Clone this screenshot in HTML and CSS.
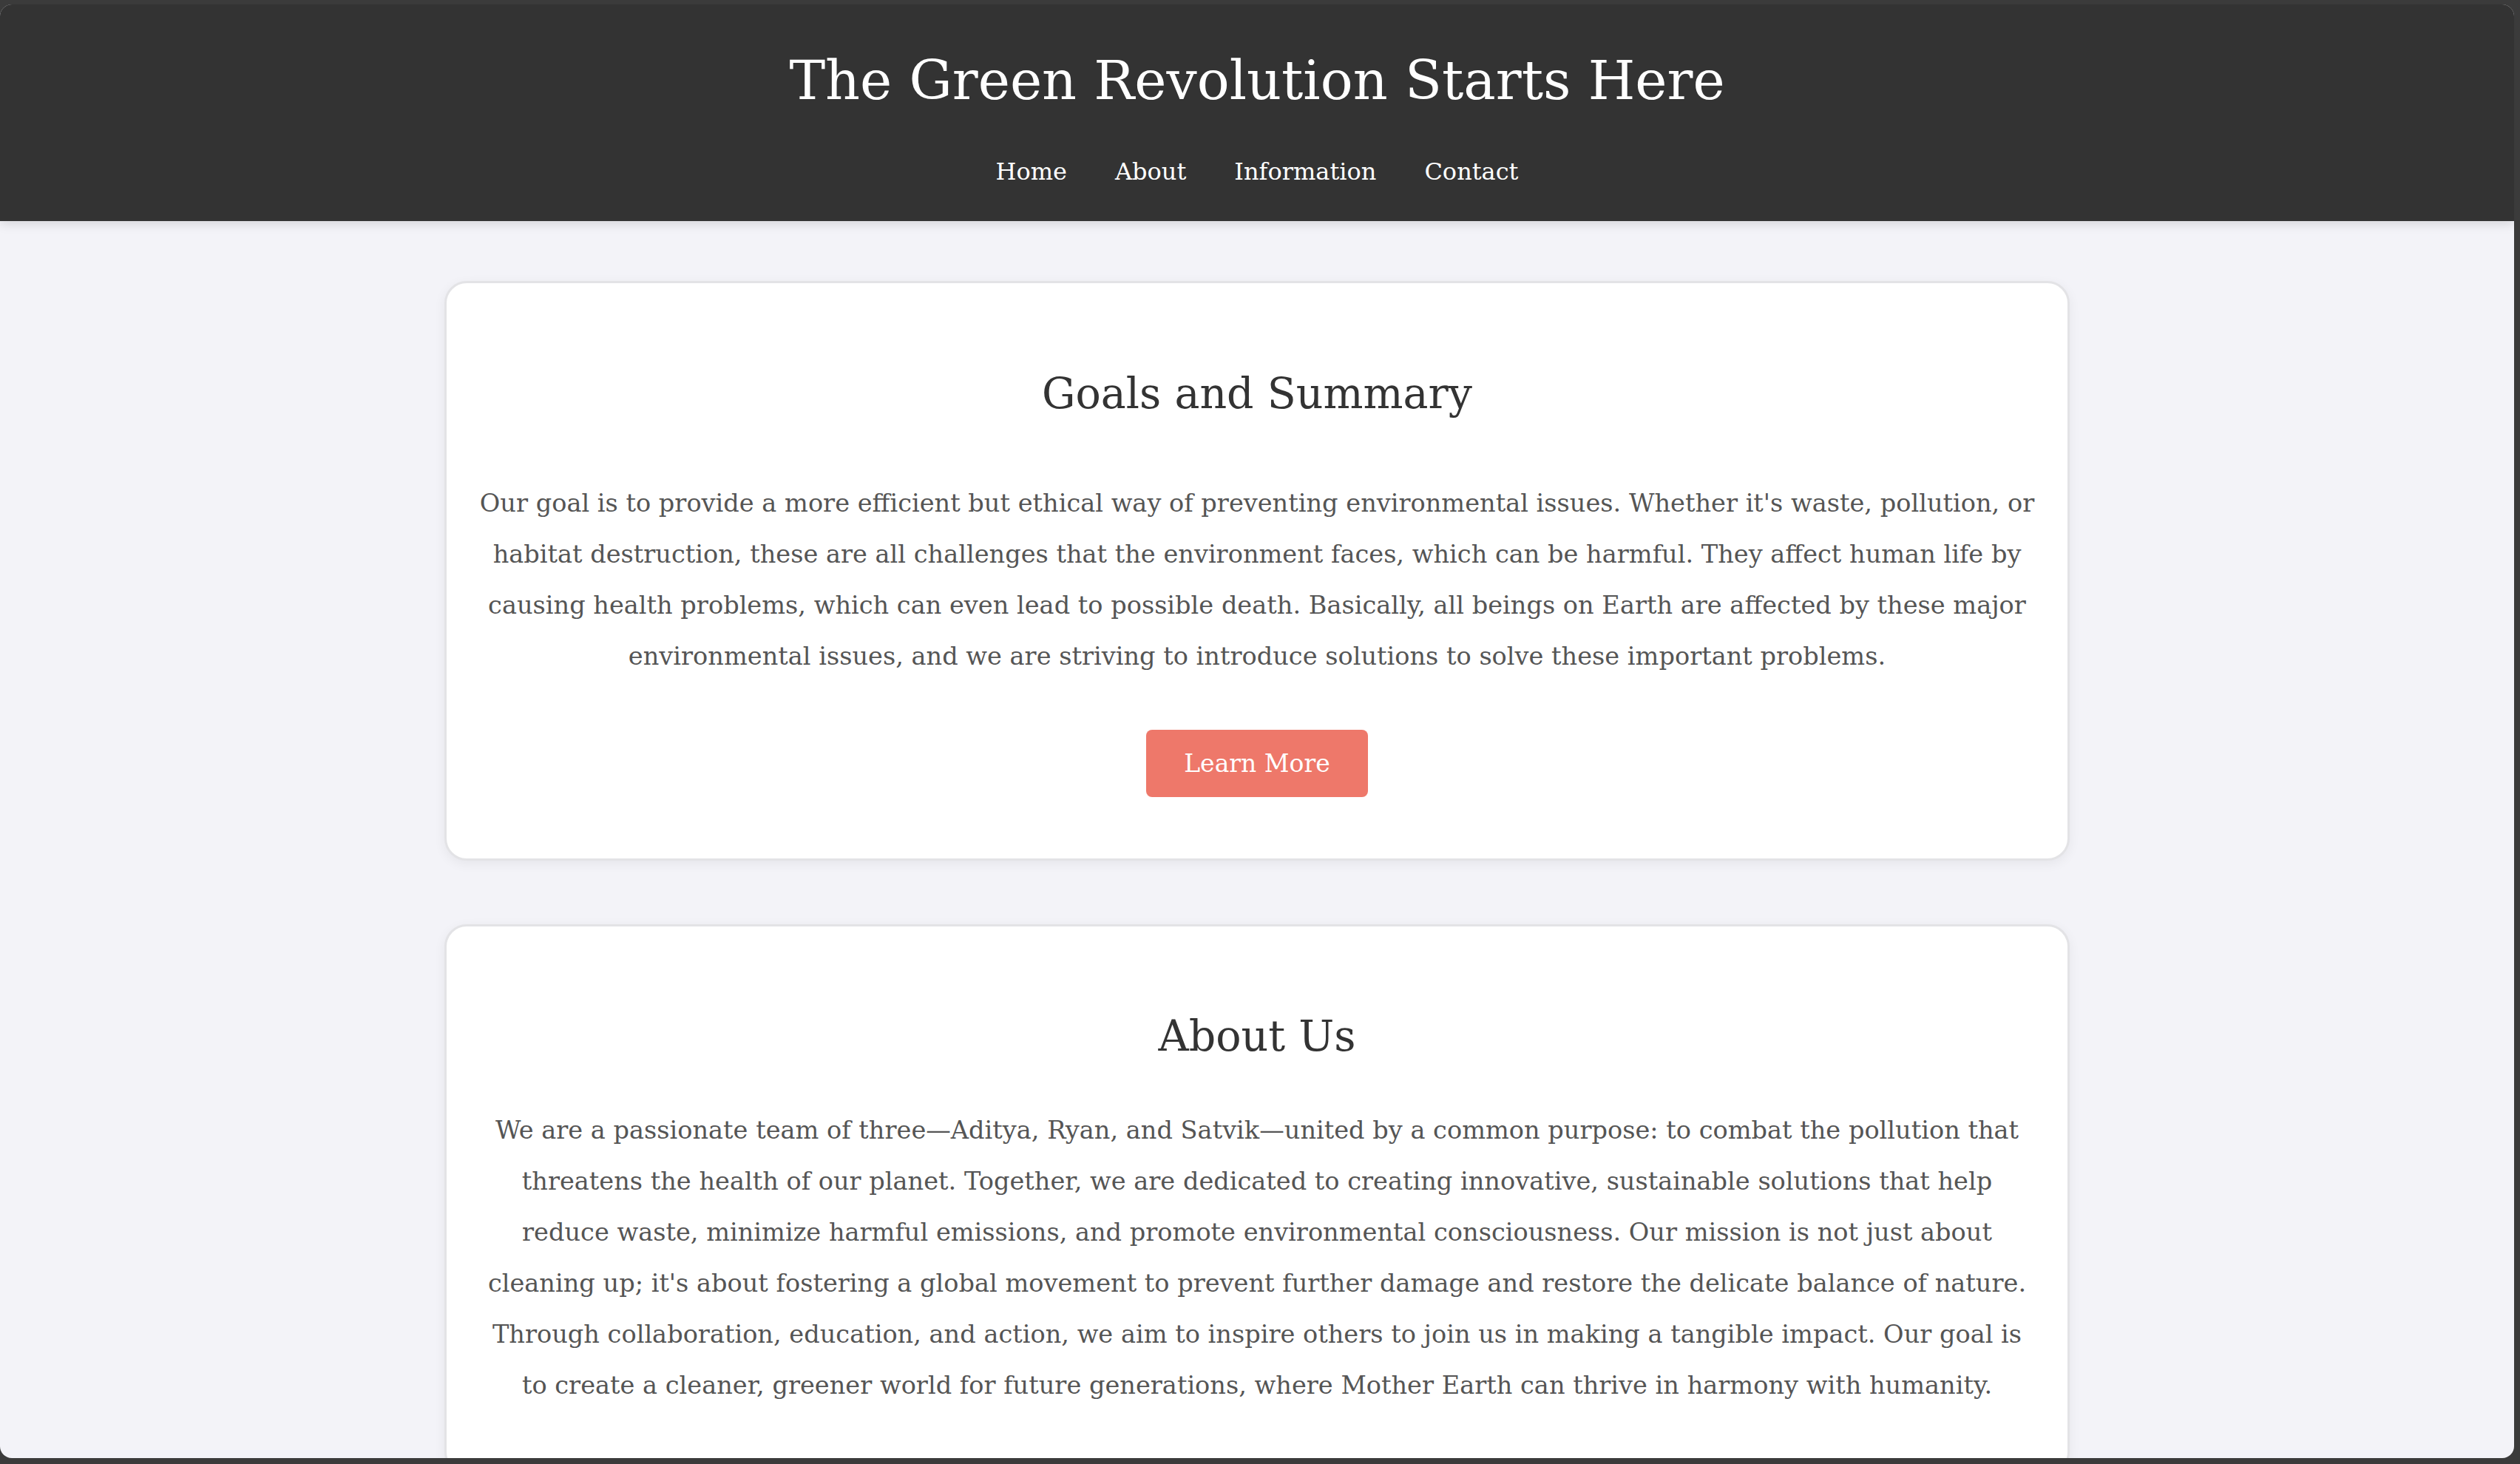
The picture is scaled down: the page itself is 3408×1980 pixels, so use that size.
FILE: index.html
```html
<!DOCTYPE html>
<html lang="en">
<head>
<meta charset="utf-8">
<title>The Green Revolution Starts Here</title>
<link rel="stylesheet" href="styles.css">
</head>
<body>
<div class="window">
  <header class="site-header">
    <h1 class="site-title">The Green Revolution Starts Here</h1>
    <nav class="site-nav">
      <a href="#" class="nav-link">Home</a>
      <a href="#" class="nav-link">About</a>
      <a href="#" class="nav-link">Information</a>
      <a href="#" class="nav-link">Contact</a>
    </nav>
  </header>
  <main class="content">
    <section class="card card-goals">
      <h2 class="card-title">Goals and Summary</h2>
      <p class="card-text">Our goal is to provide a more efficient but ethical way of preventing environmental issues. Whether it's waste, pollution, or habitat destruction, these are all challenges that the environment faces, which can be harmful. They affect human life by causing health problems, which can even lead to possible death. Basically, all beings on Earth are affected by these major environmental issues, and we are striving to introduce solutions to solve these important problems.</p>
      <a href="#" class="btn">Learn More</a>
    </section>
    <section class="card card-about">
      <h2 class="card-title">About Us</h2>
      <p class="card-text">We are a passionate team of three—Aditya, Ryan, and Satvik—united by a common purpose: to combat the pollution that threatens the health of our planet. Together, we are dedicated to creating innovative, sustainable solutions that help reduce waste, minimize harmful emissions, and promote environmental consciousness. Our mission is not just about cleaning up; it's about fostering a global movement to prevent further damage and restore the delicate balance of nature. Through collaboration, education, and action, we aim to inspire others to join us in making a tangible impact. Our goal is to create a cleaner, greener world for future generations, where Mother Earth can thrive in harmony with humanity.</p>
    </section>
  </main>
</div>
</body>
</html>
```
FILE: styles.css
```css
html, body {
  margin: 0;
  padding: 0;
}

body {
  background: #3b3b3b;
  height: 1980px;
  overflow: hidden;
  font-family: "DejaVu Serif", "Liberation Serif", serif;
}

.window {
  width: 3400px;
  height: 1966px;
  margin-top: 6px;
  border-radius: 16px;
  overflow: hidden;
  background: #f3f3f8;
}

.site-header {
  position: relative;
  z-index: 1;
  background: #333333;
  padding: 59px 0 47px;
  text-align: center;
  box-shadow: 0 4px 14px rgba(0, 0, 0, 0.12);
}

.site-title {
  margin: 0;
  font-weight: normal;
  font-size: 73px;
  line-height: 1.2;
  color: #ffffff;
}

.site-nav {
  margin-top: 59px;
  display: flex;
  justify-content: center;
  gap: 65px;
}

.nav-link {
  color: #ffffff;
  text-decoration: none;
  font-size: 32px;
  line-height: 40px;
}

.content {
  padding-top: 81px;
  display: flex;
  flex-direction: column;
  align-items: center;
  gap: 86px;
}

.card {
  box-sizing: border-box;
  width: 2198px;
  background: #ffffff;
  border: 3px solid #e3e3e6;
  border-radius: 30px;
  box-shadow: 0 4px 16px rgba(0, 0, 0, 0.06);
  padding: 114px 40px 83px;
  text-align: center;
}

.card-title {
  margin: 0;
  font-weight: normal;
  font-size: 57px;
  line-height: 70px;
  color: #333333;
}

.card-text {
  margin: 0;
  font-size: 33.6px;
  line-height: 69px;
  color: #555555;
}

.card-goals .card-text {
  margin-top: 79px;
}

.card-about {
  padding-top: 113px;
}

.card-about .card-text {
  margin-top: 58px;
}

.btn {
  display: inline-block;
  margin-top: 65px;
  width: 300px;
  height: 91px;
  box-sizing: border-box;
  line-height: 91px;
  background: #ee786a;
  color: #ffffff;
  text-decoration: none;
  font-size: 33px;
  border-radius: 8px;
}
```
